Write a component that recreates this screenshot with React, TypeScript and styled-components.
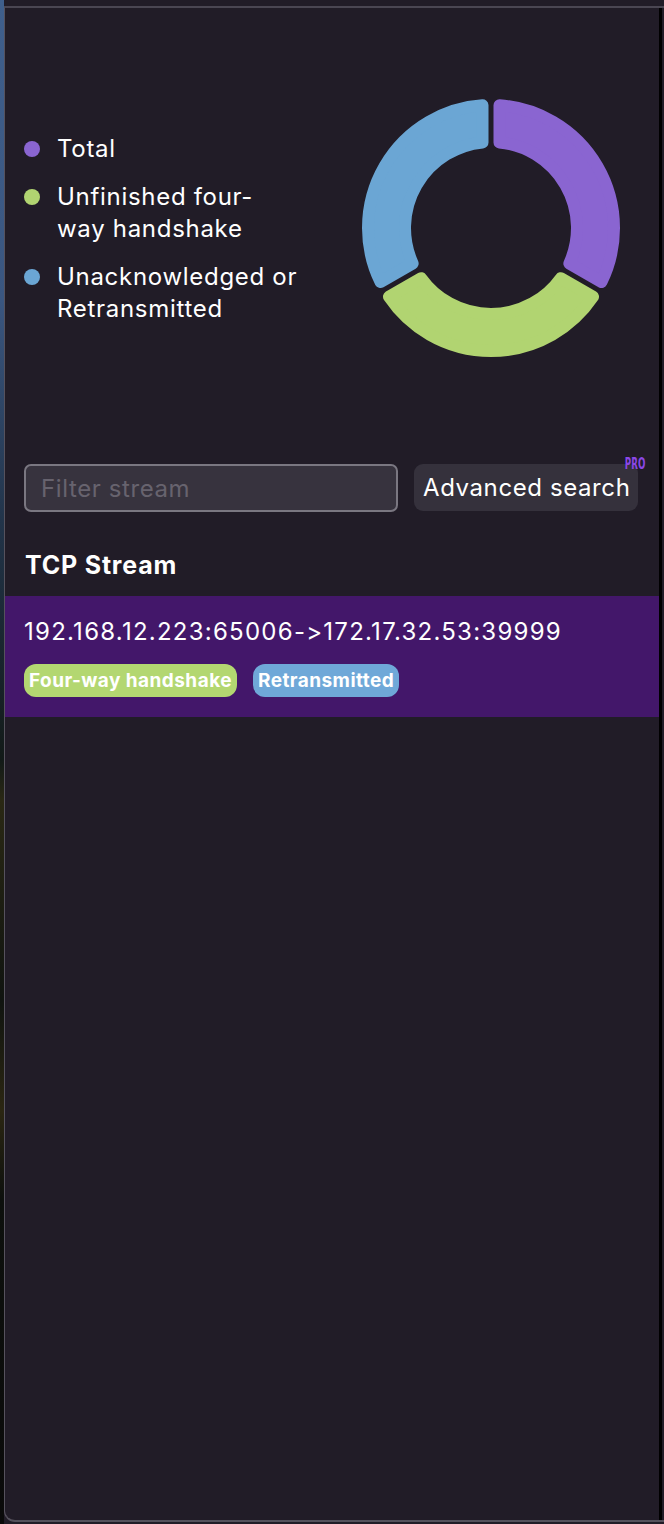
import React from "react";
import styled, { createGlobalStyle } from "styled-components";

const GlobalStyle = createGlobalStyle`
  * { box-sizing: border-box; }
  html, body { margin: 0; padding: 0; background: #0a0a0a; }
  body {
    font-family: Inter, "Noto Sans", sans-serif;
    -webkit-font-smoothing: antialiased;
    font-variant-ligatures: none;
    font-feature-settings: "calt" 0, "liga" 0;
  }
`;

const Screen = styled.div`
  display: flex;
  height: 1524px;
  width: 664px;
  background: #211c27;
  overflow: hidden;
`;

const Backdrop = styled.div`
  width: 4px;
  flex: none;
  background: linear-gradient(
    180deg,
    #3f5f8c 0px,
    #3a5680 300px,
    #22344a 520px,
    #121a18 760px,
    #2a2814 800px,
    #101410 1000px,
    #2b2612 1110px,
    #0d100d 1200px,
    #0a0a0a 1524px
  );
`;

const Window = styled.div`
  flex: 1;
  display: flex;
  flex-direction: column;
  margin-top: 6px;
  height: 1516px;
  border-top: 2px solid #4a4652;
  border-left: 1px solid #56525d;
  border-bottom: 2px solid #55515c;
  border-bottom-left-radius: 11px;
  background: #211c27;
  overflow: hidden;
`;

const WindowBody = styled.div`
  flex: 1;
  display: flex;
`;

const Content = styled.div`
  flex: 1;
  display: flex;
  flex-direction: column;
  color: #ffffff;
  letter-spacing: 0.6px;
`;

const EdgeBar = styled.div`
  width: 3px;
  flex: none;
  background: #000000;
`;

const EdgeGap = styled.div`
  width: 2px;
  flex: none;
`;

const ChartSection = styled.div`
  display: flex;
  align-items: center;
  margin-top: 90px;
  height: 260px;
  padding-left: 19px;
  padding-right: 38px;
`;

const Legend = styled.ul`
  list-style: none;
  margin: 2px 0 0 0;
  padding: 0;
  display: flex;
  flex-direction: column;
  gap: 16px;
`;

const LegendItem = styled.li`
  display: flex;
  align-items: flex-start;
  gap: 17px;
`;

const Dot = styled.span<{ $color: string }>`
  flex: none;
  width: 16px;
  height: 16px;
  border-radius: 50%;
  margin-top: 8px;
  background: ${(p) => p.$color};
`;

const LegendLabel = styled.span`
  font-size: 24px;
  line-height: 32px;
  width: 241px;
  letter-spacing: 0.7px;
  color: #ffffff;
`;

const ChartBox = styled.div`
  margin-left: auto;
  width: 260px;
  height: 260px;
`;

const FilterRow = styled.div`
  display: flex;
  gap: 16px;
  margin-top: 106px;
  padding-left: 19px;
  padding-right: 20px;
`;

const FilterInput = styled.input`
  width: 374px;
  height: 48px;
  border: 2px solid #7a7781;
  border-radius: 7px;
  background: #37333e;
  color: #ffffff;
  font-family: Inter, "Noto Sans", sans-serif;
  font-size: 24px;
  letter-spacing: 0.6px;
  padding: 0 0 0 15px;
  outline: none;
  &::placeholder { color: #67636e; }
`;

const AdvancedButton = styled.button`
  position: relative;
  width: 224px;
  height: 47px;
  border: none;
  border-radius: 9px;
  background: #35313c;
  color: #ffffff;
  font-family: Inter, "Noto Sans", sans-serif;
  font-size: 24px;
  letter-spacing: 0.6px;
  padding: 0 0 0 9px;
  text-align: left;
  white-space: nowrap;
`;

const ProBadge = styled.span`
  position: absolute;
  top: -8px;
  right: -7px;
  font-family: "DejaVu Sans", sans-serif;
  font-weight: 700;
  font-size: 15px;
  line-height: 16px;
  letter-spacing: 0;
  color: #8b47e6;
  transform: scaleX(0.58);
  transform-origin: right center;
`;

const SectionTitle = styled.h2`
  margin: 37px 0 0 0;
  padding-left: 20px;
  font-size: 25px;
  line-height: 32px;
  font-weight: 700;
  letter-spacing: 0.8px;
  color: #ffffff;
`;

const StreamList = styled.div`
  margin-top: 15px;
  display: flex;
  flex-direction: column;
`;

const StreamRow = styled.div<{ $active?: boolean }>`
  display: flex;
  flex-direction: column;
  gap: 16px;
  padding: 20px 19px 20px 19px;
  background: ${(p) => (p.$active ? "#43176a" : "transparent")};
`;

const StreamAddr = styled.div`
  font-size: 24px;
  line-height: 32px;
  letter-spacing: 1.25px;
  color: #ffffff;
`;

const Tags = styled.div`
  display: flex;
  gap: 16px;
`;

const Tag = styled.span<{ $color: string }>`
  display: inline-flex;
  align-items: center;
  height: 33px;
  padding: 0 5px;
  border-radius: 12px;
  background: ${(p) => p.$color};
  color: #ffffff;
  font-weight: 700;
  font-size: 19px;
  letter-spacing: 0.45px;
`;

const COLORS = {
  purple: "#8a65d1",
  green: "#b1d471",
  blue: "#6ba6d4",
};

function segmentPath(a0: number, a1: number): string {
  const cx = 130;
  const cy = 130;
  const corner = 6;
  const Ro = 129 - corner;
  const Ri = 80 + corner;
  const d = 2.5 + corner;
  const rad = (deg: number) => (deg * Math.PI) / 180;
  const pt = (r: number, deg: number) =>
    `${(cx + r * Math.sin(rad(deg))).toFixed(2)} ${(cy - r * Math.cos(rad(deg))).toFixed(2)}`;
  const dO = (Math.asin(d / Ro) * 180) / Math.PI;
  const dI = (Math.asin(d / Ri) * 180) / Math.PI;
  const oStart = a0 + dO;
  const oEnd = a1 - dO;
  const iStart = a0 + dI;
  const iEnd = a1 - dI;
  const largeO = oEnd - oStart > 180 ? 1 : 0;
  const largeI = iEnd - iStart > 180 ? 1 : 0;
  return [
    `M ${pt(Ro, oStart)}`,
    `A ${Ro} ${Ro} 0 ${largeO} 1 ${pt(Ro, oEnd)}`,
    `L ${pt(Ri, iEnd)}`,
    `A ${Ri} ${Ri} 0 ${largeI} 0 ${pt(Ri, iStart)}`,
    "Z",
  ].join(" ");
}

const segments = [
  { from: 0, to: 120, color: COLORS.purple },
  { from: 120, to: 240, color: COLORS.green },
  { from: 240, to: 360, color: COLORS.blue },
];

function Donut() {
  return (
    <svg width="260" height="260" viewBox="0 0 260 260">
      {segments.map((s) => (
        <path
          key={s.from}
          d={segmentPath(s.from, s.to)}
          fill={s.color}
          stroke={s.color}
          strokeWidth={12}
          strokeLinejoin="round"
        />
      ))}
    </svg>
  );
}

const legend = [
  { label: "Total", color: COLORS.purple },
  { label: "Unfinished four-way handshake", color: COLORS.green },
  { label: "Unacknowledged or Retransmitted", color: COLORS.blue },
];

export default function App() {
  return (
    <>
      <GlobalStyle />
      <Screen>
        <Backdrop />
        <Window>
          <WindowBody>
            <Content>
              <ChartSection>
                <Legend>
                  {legend.map((l) => (
                    <LegendItem key={l.label}>
                      <Dot $color={l.color} />
                      <LegendLabel>{l.label}</LegendLabel>
                    </LegendItem>
                  ))}
                </Legend>
                <ChartBox>
                  <Donut />
                </ChartBox>
              </ChartSection>
              <FilterRow>
                <FilterInput placeholder="Filter stream" />
                <AdvancedButton>
                  Advanced search
                  <ProBadge>PRO</ProBadge>
                </AdvancedButton>
              </FilterRow>
              <SectionTitle>TCP Stream</SectionTitle>
              <StreamList>
                <StreamRow $active>
                  <StreamAddr>192.168.12.223:65006-&gt;172.17.32.53:39999</StreamAddr>
                  <Tags>
                    <Tag $color="#b3d771">Four-way handshake</Tag>
                    <Tag $color="#6fa8d8">Retransmitted</Tag>
                  </Tags>
                </StreamRow>
              </StreamList>
            </Content>
            <EdgeBar />
            <EdgeGap />
          </WindowBody>
        </Window>
      </Screen>
    </>
  );
}
